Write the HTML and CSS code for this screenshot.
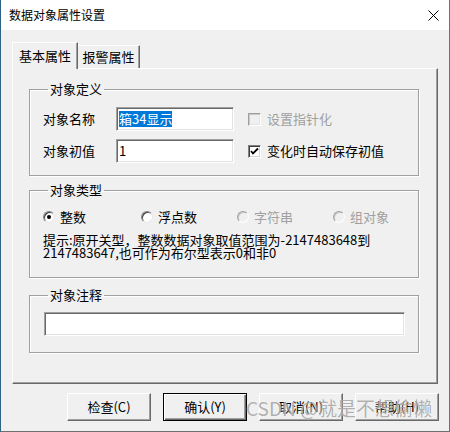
FILE: index.html
```html
<!DOCTYPE html>
<html lang="zh">
<head>
<meta charset="utf-8">
<title>数据对象属性设置</title>
<link rel="stylesheet" href="styles.css">
</head>
<body>
<div class="window">
  <div class="titlebar">
    <span class="title">数据对象属性设置</span>
    <svg class="close" width="11" height="11" viewBox="0 0 11 11"><path d="M0.5 0.5 L10.5 10.5 M10.5 0.5 L0.5 10.5" stroke="#000" stroke-width="1" fill="none"/></svg>
  </div>
  <div class="content">
    <div class="tabs">
      <div class="tab active">基本属性</div>
      <div class="tab">报警属性</div>
    </div>
    <div class="panel">
      <fieldset class="group g1">
        <legend>对象定义</legend>
        <div class="defgrid">
          <span class="lbl">对象名称</span>
          <div class="field"><span class="sel">箱34显示</span></div>
          <label class="check disabled"><span class="box"></span><span>设置指针化</span></label>
          <span class="lbl">对象初值</span>
          <div class="field"><span>1</span></div>
          <label class="check"><span class="box"><svg width="9" height="9" viewBox="0 0 9 9"><path d="M1 4 L3 6.5 L8 1.5" stroke="#000" stroke-width="1.8" fill="none"/></svg></span><span>变化时自动保存初值</span></label>
        </div>
      </fieldset>
      <fieldset class="group g2">
        <legend>对象类型</legend>
        <div class="radios">
          <label class="radio"><span class="dot on"></span><span>整数</span></label>
          <label class="radio"><span class="dot"></span><span>浮点数</span></label>
          <label class="radio disabled"><span class="dot"></span><span>字符串</span></label>
          <label class="radio disabled"><span class="dot"></span><span>组对象</span></label>
        </div>
        <p class="hint">提示:原开关型，整数数据对象取值范围为-2147483648到<br>2147483647,也可作为布尔型表示0和非0</p>
      </fieldset>
      <fieldset class="group g3">
        <legend>对象注释</legend>
        <div class="field wide"></div>
      </fieldset>
    </div>
    <div class="buttons">
      <button class="btn">检查(C)</button>
      <button class="btn focus">确认(Y)</button>
      <button class="btn">取消(N)</button>
      <button class="btn">帮助(H)</button>
    </div>
  </div>
  <div class="watermark">CSDN @就是不想偷懒</div>
</div>
</body>
</html>
```
FILE: styles.css
```css
html, body {
  margin: 0;
  padding: 0;
  background: #f0f0f0;
}
.window {
  position: relative;
  width: 450px;
  height: 432px;
  box-sizing: border-box;
  border: 1px solid #707070;
  border-top: none;
  border-left-color: #2f6385;
  background: #f0f0f0;
  display: flex;
  flex-direction: column;
  font-family: "Noto Sans CJK SC", "Noto Sans", sans-serif;
  font-size: 13px;
  color: #000;
  overflow: hidden;
}
.titlebar {
  height: 30px;
  flex: none;
  background: #fff;
  display: flex;
  align-items: center;
  justify-content: space-between;
  padding: 0 10px 0 8px;
}
.title {
  font-size: 12px;
  line-height: 14px;
}
.close {
  display: block;
}
.content {
  flex: 1;
  padding: 12px 11px 0 11px;
  display: flex;
  flex-direction: column;
}
.tabs {
  display: flex;
  align-items: flex-end;
  height: 26px;
  position: relative;
  z-index: 1;
}
.tab {
  box-sizing: border-box;
  height: 23px;
  width: 62px;
  padding-top: 3px;
  text-align: center;
  line-height: 16px;
  border-top: 1px solid #fff;
  border-left: 1px solid #fff;
  border-right: 1px solid #696969;
  box-shadow: inset -1px 0 0 #a0a0a0;
  background: #f0f0f0;
}
.tab.active {
  width: 66px;
  height: 27px;
  margin-bottom: -1px;
  padding-top: 5px;
  border-right: 1px solid #696969;
}
.tab.active + .tab {
  border-left: none;
}
.panel {
  box-sizing: border-box;
  height: 316px;
  border-top: 1px solid #fff;
  border-left: 1px solid #fff;
  border-right: 1px solid #696969;
  border-bottom: 1px solid #696969;
  box-shadow: inset -1px -1px 0 #a0a0a0;
  padding: 13px 18px 0 16px;
  display: flex;
  flex-direction: column;
}
.group {
  margin: 0;
  padding: 0 13px;
  border: 1px solid #a0a0a0;
  box-shadow: inset 1px 1px 0 #fff, 1px 1px 0 #fff;
  min-width: 0;
}
.group legend {
  padding: 0 2px;
  margin-left: 5px;
  line-height: 14px;
  height: 14px;
}
.g1 {
  padding-top: 11px;
  padding-bottom: 12px;
}
.g2 {
  margin-top: 7px;
  padding-top: 12px;
  padding-bottom: 18px;
}
.g3 {
  margin-top: 10px;
  padding-top: 10px;
  padding-bottom: 16px;
}
.defgrid {
  display: grid;
  grid-template-columns: 73px 118px auto;
  grid-template-rows: 24px 24px;
  row-gap: 8px;
  align-items: center;
}
.lbl {
  line-height: 16px;
}
.field {
  box-sizing: border-box;
  height: 24px;
  background: #fff;
  border: 1px solid;
  border-color: #a0a0a0 #fff #fff #a0a0a0;
  box-shadow: inset 1px 1px 0 #696969, inset -1px -1px 0 #e3e3e3;
  padding: 3px 0 0 2px;
  line-height: 16px;
  white-space: nowrap;
  overflow: hidden;
}
.field.wide {
  width: 361px;
  margin-left: 1px;
}
.sel {
  background: #0078d7;
  color: #fff;
  display: inline-block;
  line-height: 16px;
}
.check {
  display: flex;
  align-items: center;
  gap: 6px;
  margin-left: 14px;
  line-height: 16px;
}
.check .box {
  box-sizing: border-box;
  width: 13px;
  height: 13px;
  background: #fff;
  border: 1px solid;
  border-color: #808080 #fff #fff #808080;
  box-shadow: inset 1px 1px 0 #404040, inset -1px -1px 0 #d4d4d4;
  display: flex;
  align-items: center;
  justify-content: center;
}
.check.disabled {
  color: #a0a0a0;
}
.check.disabled .box {
  background: #f0f0f0;
  border-color: #a0a0a0 #fff #fff #a0a0a0;
  box-shadow: inset 1px 1px 0 #c8c8c8, inset -1px -1px 0 #e3e3e3;
}
.radios {
  display: grid;
  grid-template-columns: 98px 96px 96px auto;
  height: 16px;
  align-items: center;
}
.radio {
  display: flex;
  align-items: center;
  gap: 5px;
  line-height: 16px;
}
.radio.disabled {
  color: #a0a0a0;
}
.dot {
  box-sizing: border-box;
  width: 12px;
  height: 12px;
  border-radius: 50%;
  background: #fff;
  border: 1px solid;
  border-color: #808080 #e8e8e8 #e8e8e8 #808080;
  box-shadow: inset 1px 1px 0 #404040;
  position: relative;
}
.radio.disabled .dot {
  background: #f0f0f0;
  border-color: #a0a0a0 #fff #fff #a0a0a0;
  box-shadow: inset 1px 1px 0 #c8c8c8;
}
.dot.on::after {
  content: "";
  position: absolute;
  left: 3px;
  top: 3px;
  width: 4px;
  height: 4px;
  border-radius: 50%;
  background: #000;
}
.hint {
  margin: 8px 0 0 0;
  line-height: 13px;
  white-space: nowrap;
}
.buttons {
  display: flex;
  justify-content: flex-end;
  gap: 12px;
  margin-top: 9px;
  margin-right: -1px;
}
.btn {
  box-sizing: border-box;
  width: 84px;
  height: 28px;
  font: inherit;
  font-size: 13px;
  color: #000;
  background: #f0f0f0;
  border: 1px solid;
  border-color: #fff #696969 #696969 #fff;
  box-shadow: inset -1px -1px 0 #a0a0a0;
  padding: 0;
  line-height: 16px;
}
.btn.focus {
  border: 1px solid #000;
  box-shadow: inset 1px 1px 0 #fff, inset -1px -1px 0 #696969, inset -2px -2px 0 #a0a0a0;
}
.watermark {
  position: absolute;
  left: 245px;
  top: 394px;
  font-size: 19px;
  line-height: 28px;
  white-space: nowrap;
  color: rgba(110, 110, 110, 0.55);
  text-shadow: 0 0 1px rgba(255, 255, 255, 0.9);
  pointer-events: none;
}
```
